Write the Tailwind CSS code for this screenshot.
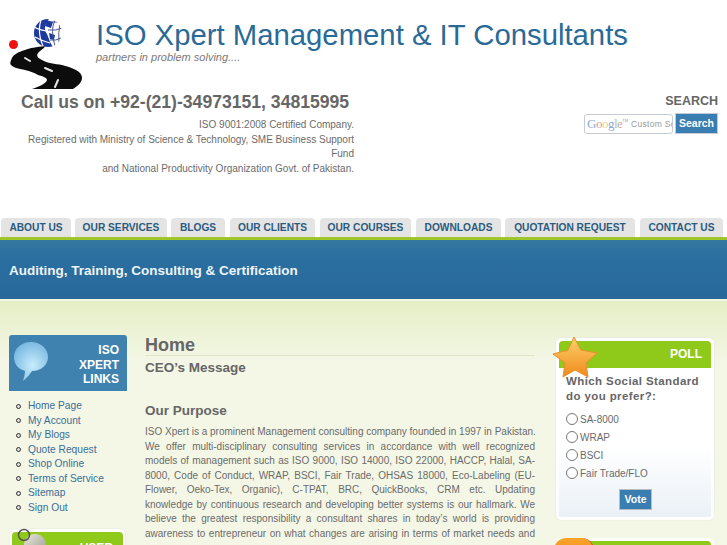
<!DOCTYPE html>
<html><head><meta charset="utf-8"><script src="https://cdn.jsdelivr.net/npm/@tailwindcss/browser@4"></script></head>
<body class="m-0 bg-white">
<div class="w-[727px] h-[545px] overflow-hidden bg-white text-[#6b6b6b] font-['Liberation_Sans',Arial,sans-serif]">
  <header class="h-[218px] flex">
    <div class="w-[364px] shrink-0 flex flex-col">
      <div class="h-[91px] flex">
        <svg class="w-[96px] h-[91px] shrink-0" viewBox="0 0 96 91">
          <defs><clipPath id="g"><circle cx="48" cy="33" r="14"/></clipPath></defs>
          <circle cx="13.5" cy="44.5" r="4.5" fill="#ee1111"/>
          <path d="M45 46 C36 47 30 48 25 50 C18 52 13 55 12 58 C10 62 10 64 11 65 C14 68 20 69 25 70 C30 71 35 73 38 75 C43 76 47 78 47 80 C46 84 38 87 32 89 L73 89 C78 86 82 82 82 78 C82 76 81 74 80 73 C76 69 69 67 62 65 C55 64 47 63 42 60 C38 58 36 56 38 53 C40 51 42 49 44 48 Z" fill="#0c0c0c"/>
          <path d="M25 58 L30 61 M45 68 L52 71 M55 87 L58 80" stroke="#e8e8e8" stroke-width="2" fill="none" stroke-linecap="round"/>
          <g clip-path="url(#g)">
            <circle cx="48" cy="33" r="14" fill="#fff"/>
            <path d="M34 19 H49 C44 24 44 30 47 34 C49 39 50 43 53 47 H34 Z" fill="#1c3aa0"/>
            <path d="M46 20 L53 22 L51 28 L45 26 Z M49 33 L55 35 L54 40 L50 39 Z" fill="#1c3aa0"/>
            <g stroke="#fff" stroke-width="1.2" fill="none"><path d="M34 27 Q42 31 50 31 M35 37 Q42 41 50 43 M41 20 Q37 32 43 46"/></g>
            <g stroke="#46568f" stroke-width="1" fill="none"><path d="M48 30 Q56 31 62 28 M50 40 Q56 41 61 38 M55 20 Q50 30 55 46 M60 24 Q58 32 59 42 M50 22 Q56 22 60 22"/></g>
          </g>
        </svg>
        <div class="flex-1 pt-[18px] whitespace-nowrap">
          <div class="text-[29.3px] leading-[34px] text-[#2a6a97]">ISO Xpert Management &amp; IT Consultants</div>
          <div class="text-[11px] leading-[10px] italic text-[#7a7a7a]">partners in problem solving....</div>
        </div>
      </div>
      <div class="pl-[21px] text-[17.6px] leading-[22px] font-bold whitespace-nowrap text-[#666]">Call us on +92-(21)-34973151, 34815995</div>
      <div class="mt-[5px] pr-[10px] text-right text-[10px] leading-[14.5px] whitespace-nowrap">
        ISO 9001:2008 Certified Company.<br>Registered with Ministry of Science &amp; Technology, SME Business Support<br>Fund<br>and National Productivity Organization Govt. of Pakistan.
      </div>
    </div>
    <div class="flex-1 flex flex-col items-end pr-[9px] pt-[93px]">
      <div class="text-[12.5px] leading-[16px] font-bold text-[#666]">SEARCH</div>
      <div class="mt-[4px] flex items-stretch gap-[2px]">
        <div class="w-[89px] h-[20px] mt-[1px] rounded-[3px] border border-[#c3ccd6] bg-white flex items-center pl-[2px] overflow-hidden whitespace-nowrap text-[8.5px] text-[#999]">
          <span class="font-['Liberation_Serif',serif] text-[13px] tracking-[-0.5px] shrink-0"><span class="text-[#8fa7dc]">G</span><span class="text-[#e0a0a0]">o</span><span class="text-[#e6cf90]">o</span><span class="text-[#8fa7dc]">g</span><span class="text-[#a5cfa0]">l</span><span class="text-[#e0a0a0]">e</span></span><span class="text-[4px] self-start mt-[3px] mr-[3px] shrink-0">TM</span><span class="tracking-[0.3px]">Custom Se</span>
        </div>
        <div class="w-[43px] h-[21px] border border-[#c3ccd6] bg-[#3a7db0] text-white text-[10.5px] font-bold flex items-center justify-center">Search</div>
      </div>
    </div>
  </header>

  <nav class="h-[19px] pl-[1px] flex text-[10.2px] font-bold text-[#2c5b80] whitespace-nowrap">
    <a class="w-[70px] mr-[4px] bg-[#e4e4e4] rounded-t-[4px] flex items-center justify-center">ABOUT US</a>
    <a class="w-[92px] mr-[4px] bg-[#e4e4e4] rounded-t-[4px] flex items-center justify-center">OUR SERVICES</a>
    <a class="w-[54px] mr-[5px] bg-[#e4e4e4] rounded-t-[4px] flex items-center justify-center">BLOGS</a>
    <a class="w-[85px] mr-[5px] bg-[#e4e4e4] rounded-t-[4px] flex items-center justify-center">OUR CLIENTS</a>
    <a class="w-[91px] mr-[5px] bg-[#e4e4e4] rounded-t-[4px] flex items-center justify-center">OUR COURSES</a>
    <a class="w-[85px] mr-[4px] bg-[#e4e4e4] rounded-t-[4px] flex items-center justify-center">DOWNLOADS</a>
    <a class="w-[130px] mr-[5px] bg-[#e4e4e4] rounded-t-[4px] flex items-center justify-center">QUOTATION REQUEST</a>
    <a class="w-[83px] bg-[#e4e4e4] rounded-t-[4px] flex items-center justify-center">CONTACT US</a>
  </nav>
  <div class="h-[3px] bg-[#9fc62a]"></div>
  <div class="h-[59px] bg-gradient-to-b from-[#35789f] via-[#2a6fa0] via-[30%] to-[#28699a] flex items-center pl-[9px] pt-[3px] text-[13.5px] font-bold text-[#eef4f8]">Auditing, Training, Consulting &amp; Certification</div>
  <div class="h-[2px] bg-[#f3f6e6]"></div>

  <main class="h-[244px] bg-gradient-to-b from-[#e5eec5] via-[#f4f7e6] via-[25%] to-[#f4f7e6] flex pt-[34px]">
    <aside class="w-[145px] shrink-0 pl-[9px]">
      <div class="relative w-[118px] h-[56px] bg-[#3f82b0] rounded-t-[3px] text-white font-bold text-[12px] leading-[14.5px] text-right pr-[8px] pt-[8px]">
        <svg class="absolute left-[4px] top-[6px] w-[36px] h-[40px]" viewBox="0 0 36 40"><defs><radialGradient id="b" cx=".55" cy=".6" r=".7"><stop offset="0" stop-color="#c8ecfb"/><stop offset="1" stop-color="#6fb2e0"/></radialGradient></defs><path d="M18 1 C28 1 35 8 35 16 C35 24 28 30 19 30 C17 33 13 38 10 40 C11 36 12 33 12 30 C5 28 1 23 1 16 C1 8 8 1 18 1 Z" fill="url(#b)"/></svg>
        ISO<br>XPERT<br>LINKS
      </div>
      <ul class="mt-[8px] text-[10.2px] leading-[14.5px] text-[#3a6e98]">
        <li class="flex items-center"><span class="w-[5px] h-[5px] rounded-full bg-[#ddd] border border-[#333] ml-[7px] mr-[7px]"></span>Home Page</li>
        <li class="flex items-center"><span class="w-[5px] h-[5px] rounded-full bg-[#ddd] border border-[#333] ml-[7px] mr-[7px]"></span>My Account</li>
        <li class="flex items-center"><span class="w-[5px] h-[5px] rounded-full bg-[#ddd] border border-[#333] ml-[7px] mr-[7px]"></span>My Blogs</li>
        <li class="flex items-center"><span class="w-[5px] h-[5px] rounded-full bg-[#ddd] border border-[#333] ml-[7px] mr-[7px]"></span>Quote Request</li>
        <li class="flex items-center"><span class="w-[5px] h-[5px] rounded-full bg-[#ddd] border border-[#333] ml-[7px] mr-[7px]"></span>Shop Online</li>
        <li class="flex items-center"><span class="w-[5px] h-[5px] rounded-full bg-[#ddd] border border-[#333] ml-[7px] mr-[7px]"></span>Terms of Service</li>
        <li class="flex items-center"><span class="w-[5px] h-[5px] rounded-full bg-[#ddd] border border-[#333] ml-[7px] mr-[7px]"></span>Sitemap</li>
        <li class="flex items-center"><span class="w-[5px] h-[5px] rounded-full bg-[#ddd] border border-[#333] ml-[7px] mr-[7px]"></span>Sign Out</li>
      </ul>
      <div class="relative mt-[14px] ml-[1px] w-[115px] h-[40px] bg-white/80 rounded-t-[5px] pt-[3px] px-[2px] shadow-[0_0_2px_#ddd]">
        <div class="h-[30px] bg-[#8fc91a] rounded-t-[4px] text-white font-bold text-[12px] leading-[14px] text-right pr-[10px] pt-[9px]">USER</div>
        <svg class="absolute left-[6px] top-[-1px] w-[34px] h-[30px]" viewBox="0 0 34 30"><defs><linearGradient id="k" x1="0" y1="0" x2="1" y2="1"><stop offset="0" stop-color="#e8e8dc"/><stop offset="1" stop-color="#9a9a8c"/></linearGradient></defs><circle cx="19" cy="17" r="11" fill="url(#k)"/><circle cx="8" cy="7" r="5.5" fill="none" stroke="#555" stroke-width="1.5"/></svg>
      </div>
    </aside>

    <section class="w-[390px] shrink-0">
      <h1 class="text-[18px] leading-[21px] font-bold text-[#666] border-b border-[#dfe5c4] h-[21px]">Home</h1>
      <h2 class="mt-[2px] text-[13.5px] leading-[20px] font-bold text-[#666]">CEO’s Message</h2>
      <h2 class="mt-[23px] text-[13.5px] leading-[20px] font-bold text-[#666]">Our Purpose</h2>
      <p class="mt-[4px] text-[10px] leading-[14.5px] [&>span]:block [&>span]:[text-align-last:justify] [&>span]:whitespace-nowrap">
        <span>ISO Xpert is a prominent Management consulting company founded in 1997 in Pakistan.</span>
        <span>We offer multi-disciplinary consulting services in accordance with well recognized</span>
        <span>models of management such as ISO 9000, ISO 14000, ISO 22000, HACCP, Halal, SA-</span>
        <span>8000, Code of Conduct, WRAP, BSCI, Fair Trade, OHSAS 18000, Eco-Labeling (EU-</span>
        <span>Flower, Oeko-Tex, Organic), C-TPAT, BRC, QuickBooks, CRM etc. Updating</span>
        <span>knowledge by continuous research and developing better systems is our hallmark. We</span>
        <span>believe the greatest responsibility a consultant shares in today’s world is providing</span>
        <span>awareness to entrepreneur on what changes are arising in terms of market needs and</span>
      </p>
    </section>

    <aside class="flex-1 pl-[21px] pt-[3px]">
      <div class="relative w-[158px] h-[182px] rounded-[5px] border-[3px] border-white/80 shadow-[0_0_2px_#ddd] bg-gradient-to-b from-white via-white via-[60%] to-[#eaf1f7]">
        <div class="h-[27px] bg-[#8fc91a] rounded-t-[4px] text-white font-bold text-[12px] leading-[27px] text-right pr-[9px]">POLL</div>
        <svg class="absolute left-[-6px] top-[-5px] w-[44px] h-[43px]" viewBox="0 0 44 43"><defs><linearGradient id="s" x1="0" y1="0" x2="0" y2="1"><stop offset="0" stop-color="#fcd06a"/><stop offset="1" stop-color="#f08a1c"/></linearGradient></defs><path d="M21 1 L28 14 L44 17 L33 27 L35 41 L22 34 L10 41 L12 27 L0 18 L15 14 Z" fill="url(#s)" stroke="#e8902a" stroke-width="1" stroke-linejoin="round"/></svg>
        <div class="pl-[7px] pt-[6px] text-[11.5px] leading-[15px] font-bold tracking-[0.4px] text-[#666]">Which Social Standard<br>do you prefer?:</div>
        <div class="mt-[6px] pl-[7px] text-[10px]">
          <div class="h-[18px] flex items-center"><span class="w-[12px] h-[12px] rounded-full border border-[#777] bg-white/60 mr-[2px]"></span>SA-8000</div>
          <div class="h-[18px] flex items-center"><span class="w-[12px] h-[12px] rounded-full border border-[#777] bg-white/60 mr-[2px]"></span>WRAP</div>
          <div class="h-[18px] flex items-center"><span class="w-[12px] h-[12px] rounded-full border border-[#777] bg-white/60 mr-[2px]"></span>BSCI</div>
          <div class="h-[18px] flex items-center"><span class="w-[12px] h-[12px] rounded-full border border-[#777] bg-white/60 mr-[2px]"></span>Fair Trade/FLO</div>
        </div>
        <div class="mt-[7px] ml-[60px] w-[33px] h-[21px] border border-[#b5bec6] bg-[#3a7db0] text-white text-[10.5px] font-bold flex items-center justify-center">Vote</div>
      </div>
      <div class="relative mt-[18px] w-[158px] h-[30px] rounded-t-[5px] border-[3px] border-b-0 border-white/80">
        <div class="h-[27px] bg-[#8fc91a] rounded-t-[4px]"></div>
        <div class="absolute left-[-5px] top-[-3px] w-[40px] h-[20px] rounded-t-[12px] bg-gradient-to-b from-[#f9a52a] to-[#f08a1c] border-r border-[#e33]"></div>
      </div>
    </aside>
  </main>
</div>
</body></html>
